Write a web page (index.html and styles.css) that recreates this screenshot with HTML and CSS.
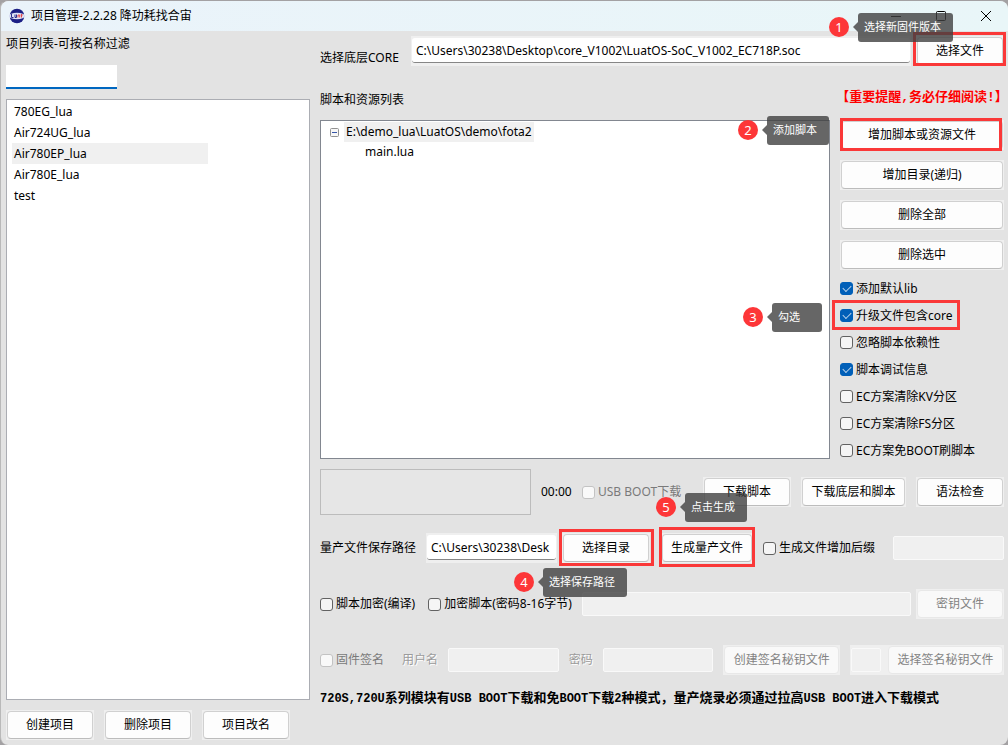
FILE: index.html
```html
<!DOCTYPE html>
<html lang="zh-CN">
<head>
<meta charset="utf-8">
<title>项目管理</title>
<link rel="stylesheet" href="styles.css">
</head>
<body>
<div class="window">
  <header class="titlebar">
    <svg class="logo" width="16" height="16" viewBox="0 0 16 16" aria-hidden="true">
      <circle cx="8" cy="8" r="7.3" fill="#1c1f85"/>
      <ellipse cx="8" cy="8" rx="8" ry="3.2" fill="#dfe3f5"/>
      <path d="M2.500 6v3.500h2M6 6.500v3h1.500v-3" fill="none" stroke="#2a2d8c"/>
      <path d="M9 9.500V7h1.700v2.500M12.500 6v3.500M11.700 7h2" fill="none" stroke="#e2474d"/>
    </svg>
    <h1 class="title">项目管理-2.2.28 降功耗找合宙</h1>
    <div class="window-controls">
      <button class="control" aria-label="最小化"><svg width="12" height="12" viewBox="0 0 12 12"><path d="M1 6.500h10" stroke="#000"/></svg></button>
      <button class="control" aria-label="最大化"><svg width="12" height="12" viewBox="0 0 12 12"><rect x="1.500" y="1.500" width="9" height="9" rx="1" fill="none" stroke="#000"/></svg></button>
      <button class="control" aria-label="关闭"><svg width="12" height="12" viewBox="0 0 12 12"><path d="M1 1l10 10M11 1L1 11" stroke="#000"/></svg></button>
    </div>
  </header>

  <main class="main">
    <section class="projects">
      <label class="label" for="filter">项目列表-可按名称过滤</label>
      <input class="filter" id="filter" type="text">
      <ul class="project-list">
        <li class="project">780EG_lua</li>
        <li class="project">Air724UG_lua</li>
        <li class="project selected">Air780EP_lua</li>
        <li class="project">Air780E_lua</li>
        <li class="project">test</li>
      </ul>
      <div class="project-actions">
        <button class="btn">创建项目</button>
        <button class="btn">删除项目</button>
        <button class="btn">项目改名</button>
      </div>
    </section>

    <section class="workspace">
      <div class="row core-row">
        <label class="core-label" for="core">选择底层CORE</label>
        <span class="field core-field"><input id="core" type="text" value="C:\Users\30238\Desktop\core_V1002\LuatOS-SoC_V1002_EC718P.soc"></span>
        <span class="mark mark-file">
          <button class="btn">选择文件</button>
          <span class="callout callout-file"><b class="step">1</b>选择新固件版本</span>
        </span>
      </div>

      <div class="resources">
        <div class="scripts">
          <h2 class="label">脚本和资源列表</h2>
          <ul class="tree">
            <li>
              <div class="node">
                <svg class="expander" width="9" height="9" viewBox="0 0 9 9"><rect x=".5" y=".5" width="8" height="8" rx="1" fill="#f7f7f7" stroke="#919191"/><path d="M2 4.500h5" stroke="#3656a8"/></svg>
                <span class="folder">E:\demo_lua\LuatOS\demo\fota2</span>
              </div>
              <ul class="children"><li class="leaf">main.lua</li></ul>
            </li>
          </ul>
        </div>
        <div class="side">
          <a class="notice" href="#">【重要提醒,务必仔细阅读!】</a>
          <span class="mark mark-add">
            <button class="btn">增加脚本或资源文件</button>
            <span class="callout callout-add"><b class="step">2</b>添加脚本</span>
          </span>
          <button class="btn">增加目录(递归)</button>
          <button class="btn">删除全部</button>
          <button class="btn">删除选中</button>
          <label class="check"><input type="checkbox" checked>添加默认lib</label>
          <div class="mark mark-check">
            <label class="check"><input type="checkbox" checked>升级文件包含core</label>
            <span class="callout callout-check"><b class="step">3</b>勾选</span>
          </div>
          <label class="check"><input type="checkbox">忽略脚本依赖性</label>
          <label class="check"><input type="checkbox" checked>脚本调试信息</label>
          <label class="check"><input type="checkbox">EC方案清除KV分区</label>
          <label class="check"><input type="checkbox">EC方案清除FS分区</label>
          <label class="check"><input type="checkbox">EC方案免BOOT刷脚本</label>
        </div>
      </div>

      <div class="row download-row">
        <div class="progress"></div>
        <span class="timer">00:00</span>
        <label class="check disabled"><input type="checkbox" disabled>USB BOOT下载</label>
        <div class="download-actions">
          <button class="btn">下载脚本</button>
          <button class="btn wide">下载底层和脚本</button>
          <button class="btn">语法检查</button>
        </div>
      </div>

      <div class="row output-row">
        <label class="output-label" for="output">量产文件保存路径</label>
        <span class="field output-field"><input id="output" type="text" value="C:\Users\30238\Desk"></span>
        <span class="mark mark-dir">
          <button class="btn">选择目录</button>
          <span class="callout callout-dir"><b class="step">4</b>选择保存路径</span>
        </span>
        <span class="mark mark-build">
          <button class="btn">生成量产文件</button>
          <span class="callout callout-build"><b class="step">5</b>点击生成</span>
        </span>
        <label class="check"><input type="checkbox">生成文件增加后缀</label>
        <input class="blank suffix" type="text" disabled aria-label="后缀">
      </div>

      <div class="row encrypt-row">
        <label class="check"><input type="checkbox">脚本加密(编译)</label>
        <label class="check second"><input type="checkbox">加密脚本(密码8-16字节)</label>
        <input class="blank secret" type="text" disabled aria-label="加密密码">
        <button class="btn" disabled>密钥文件</button>
      </div>

      <div class="row sign-row">
        <label class="check disabled"><input type="checkbox" disabled>固件签名</label>
        <label class="muted user" for="user">用户名</label>
        <input class="blank" id="user" type="text" disabled>
        <label class="muted pass" for="pass">密码</label>
        <input class="blank" id="pass" type="password" disabled>
        <button class="btn create-key" disabled>创建签名秘钥文件</button>
        <div class="key-group">
          <input class="blank" type="text" disabled aria-label="签名秘钥">
          <button class="btn" disabled>选择签名秘钥文件</button>
        </div>
      </div>

      <p class="footnote"><span class="code">720S,720U</span>系列模块有<span class="code">USB BOOT</span>下载和免<span class="code">BOOT</span>下载<span class="code">2</span>种模式，量产烧录必须通过拉高<span class="code">USB BOOT</span>进入下载模式</p>
    </section>
  </main>
</div>
</body>
</html>
```
FILE: styles.css
```css
* { box-sizing: border-box; }

body {
  margin: 0;
  background: #a3a1a3;
  color: #000;
  font: 12px/20px "Noto Sans", "Noto Sans CJK SC", sans-serif;
}

h1, h2, ul, p { margin: 0; padding: 0; font: inherit; list-style: none; }

button, input { font: inherit; color: inherit; }

.window {
  display: flex;
  flex-direction: column;
  min-height: 100vh;
  border-top: 1px solid #a3a1a3;
  border-left: 1px solid #b9b9b9;
  border-radius: 8px;
  background: #e3e3e3;
}

.titlebar {
  display: flex;
  align-items: center;
  height: 30px;
  padding-left: 8px;
  border-radius: 8px 8px 0 0;
  background: linear-gradient(90deg, #eaf3fa, #e9f6f8);
}

.title { margin-left: 6px; }
.window-controls { display: flex; margin-left: auto; }

.control {
  display: grid;
  place-items: center;
  width: 45px;
  height: 28px;
  padding: 0;
  border: 0;
  background: none;
}

.main { display: flex; flex: 1; gap: 10px; padding: 0 4px 5px 5px; }

.projects { display: flex; flex-direction: column; width: 304px; padding-top: 3px; }

.label { display: block; line-height: 20px; }

.filter {
  width: 111px;
  height: 24px;
  margin: 11px 0 10px;
  border: 0;
  border-bottom: 2px solid #0067c0;
  outline: 0;
  background: #fff;
}

.project-list { flex: 1; padding: 1px 5px; border: 1px solid #abadb3; background: #fff; }

.project { width: 196px; height: 21px; padding-left: 2px; line-height: 21px; }
.project.selected { background: #f0f0f0; }

.project-actions { display: flex; gap: 10px; margin-top: 10px; }

.btn {
  position: relative;
  z-index: 0;
  width: 88px;
  height: 30px;
  padding: 0;
  border: 0;
  background: #efefef;
  white-space: nowrap;
}

.btn::before {
  content: "";
  position: absolute;
  z-index: -1;
  inset: 1px;
  border: 1px solid #d0d0d0;
  border-bottom-color: #bcbcbc;
  border-radius: 4px;
  background: #fdfdfd;
}

.btn:disabled { color: #838383; }
.btn:disabled::before { border-color: #e8e8e8; background: #f9f9f9; }
.btn.wide { width: 105px; }

.workspace { display: flex; flex: 1; flex-direction: column; min-width: 0; padding-top: 5px; }

.row { display: flex; align-items: center; }

.field { padding: 2px 1px 3px; background: #efefef; }

.field input {
  display: block;
  width: 100%;
  height: 25px;
  padding: 0 4px;
  border: 0;
  border-bottom: 1px solid #868686;
  border-radius: 3px;
  background: #fff;
}

.core-label { flex: none; align-self: flex-end; width: 91px; line-height: 16px; }
.core-field { flex: 1; margin-right: 5px; }

.resources { display: flex; flex: 1; gap: 10px; margin-top: 24px; }
.scripts { display: flex; flex: 1; flex-direction: column; }

.tree { flex: 1; margin-top: 10px; padding: 1px 9px; border: 1px solid #828790; background: #fff; }
.node { display: flex; align-items: center; gap: 5px; }
.folder { padding: 0 2px; background: #f0f0f0; }
.children { padding-left: 35px; }

.side { display: flex; flex-direction: column; gap: 10px; width: 164px; }
.side .btn { width: 100%; }

.notice {
  height: 20px;
  margin: 0 -6px;
  color: #f00;
  font: bold 13px/16px "Liberation Mono", "Noto Sans CJK SC", monospace;
  text-align: center;
  text-decoration: none;
  white-space: nowrap;
}

.check { display: flex; align-items: center; gap: 3px; height: 17px; white-space: nowrap; }

.check input {
  position: relative;
  appearance: none;
  flex: none;
  width: 13px;
  height: 13px;
  margin: 0;
  border: 1px solid #626262;
  border-radius: 3px;
  background: #f5f5f5;
}

.check input:checked { border-color: #005fb8; background: #005fb8; }

.check input:checked::after {
  content: "";
  position: absolute;
  top: 2px;
  left: 2px;
  width: 7px;
  height: 4px;
  border: solid #b5d0ea;
  border-width: 0 0 1px 1px;
  transform: rotate(-45deg);
}

.check.disabled { color: #7a7a7a; }
.check input:disabled { border-color: #c3c3c3; background: #f9f9f9; }

.mark { position: relative; display: block; }
.mark .btn { display: block; }

.mark::after {
  content: "";
  position: absolute;
  z-index: 1;
  inset: -4px -2px 0 -3px;
  border: 3px solid #fa3838;
  pointer-events: none;
}

.mark-add::after { inset: -2px 2px -1px 0; }
.mark-check::after { inset: -7px 44px -6px -8px; }
.mark-dir::after { inset: -4px -4px -3px -3px; }
.mark-build::after { inset: -6px -2px -4px -2px; }

.callout {
  position: absolute;
  z-index: 5;
  min-width: 50px;
  height: 29px;
  padding: 0 12px 0 6px;
  border-radius: 3px;
  background: rgba(64, 64, 64, 0.8);
  color: #fff;
  font-size: 11px;
  line-height: 28px;
  white-space: nowrap;
}

.callout::before {
  content: "";
  position: absolute;
  top: 9px;
  right: 100%;
  border: solid transparent;
  border-width: 5px 5px 5px 0;
  border-right-color: rgba(64, 64, 64, 0.8);
}

.step {
  position: absolute;
  top: 4px;
  left: -29px;
  width: 20px;
  height: 20px;
  border-radius: 50%;
  background: #fd3638;
  font-size: 13px;
  font-weight: 400;
  line-height: 20px;
  text-align: center;
}

.callout-file { top: -23px; right: 51px; }
.callout-add { top: -4px; right: 175px; }
.callout-check { top: 1px; right: 182px; }
.callout-dir { top: 35px; left: -19px; }
.callout-build { top: -40px; left: 24px; }

.mark-check .callout { top: -4px; }

.download-row { margin-top: 10px; }
.progress { width: 211px; height: 46px; border: 1px solid #bcbcbc; background: #e6e6e6; }
.timer { width: 41px; margin: 0 0 0 10px; }
.download-actions { display: flex; gap: 10px; margin-left: auto; }

.output-row { margin-top: 18px; }
.output-label { flex: none; width: 106px; }
.output-field { width: 131px; margin-right: 5px; }
.mark-dir { margin-right: 11px; }
.mark-build { margin-right: 10px; }
.mark-build .btn { width: 92px; }

.blank {
  width: 111px;
  min-width: 0;
  height: 24px;
  border: 1px solid #f9f9f9;
  border-radius: 2px;
  background: #f0f0f0;
}

.suffix { flex: 1; margin-left: 18px; }

.encrypt-row { margin-top: 26px; }
.second { margin-left: 13px; }
.secret { flex: 1; margin: 0 5px 0 10px; }

.sign-row { margin-top: 26px; }
.muted { color: #9b9b9b; text-shadow: 1px 1px #fff; white-space: nowrap; }
.user { margin: 0 10px 0 18px; }
.pass { margin: 0 10px; }
.create-key { width: 117px; margin-left: 10px; }

.key-group { display: flex; flex: 1; align-items: center; gap: 6px; margin-left: 10px; background: #efefef; }
.key-group .blank { flex: 1; width: 30px; margin-left: 1px; }
.key-group .btn { width: 117px; }

.footnote {
  margin: 14px 0 31px;
  font: bold 13px/20px "Liberation Mono", "Noto Sans CJK SC", monospace;
  white-space: nowrap;
}

.code { font-size: 12px; }
```
